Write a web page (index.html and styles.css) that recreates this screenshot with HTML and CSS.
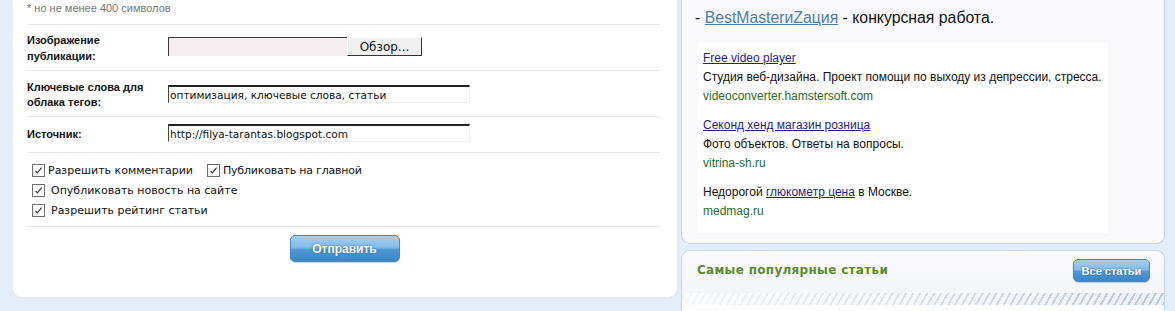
FILE: index.html
```html
<!DOCTYPE html>
<html lang="ru">
<head>
  <meta charset="UTF-8">
  <meta name="viewport" content="width=device-width, initial-scale=1.0">
  <title>Добавить публикацию</title>
  <link rel="stylesheet" href="styles.css">
</head>
<body>
  <div class="page">
    <!-- Form -->
    <div class="form-panel">
      <div class="note">* но не менее 400 символов</div>

      <div class="form-row row-image">
        <div class="label">Изображение<br>публикации:</div>
        <div class="file-field">
          <span class="file-path"></span>
          <button class="file-button" type="button">Обзор...</button>
        </div>
      </div>

      <div class="form-row row-tags">
        <div class="label">Ключевые слова для<br>облака тегов:</div>
        <input class="text-input" type="text" value="оптимизация, ключевые слова, статьи">
      </div>

      <div class="form-row row-source">
        <div class="label">Источник:</div>
        <input class="text-input" type="text" value="http://filya-tarantas.blogspot.com">
      </div>

      <div class="options">
        <div class="option-line">
          <label class="option"><svg class="check" viewBox="0 0 13 13"><rect x="0.5" y="0.5" width="12" height="12" fill="#fff" stroke="#6d6d6d"/><path d="M3.5 6.8 L5.4 8.8 L9.6 3.6" fill="none" stroke="#333" stroke-width="1.1"/></svg>Разрешить комментарии</label>
          <label class="option option-main"><svg class="check" viewBox="0 0 13 13"><rect x="0.5" y="0.5" width="12" height="12" fill="#fff" stroke="#6d6d6d"/><path d="M3.5 6.8 L5.4 8.8 L9.6 3.6" fill="none" stroke="#333" stroke-width="1.1"/></svg>Публиковать на главной</label>
        </div>
        <div class="option-line">
          <label class="option option-wide"><svg class="check" viewBox="0 0 13 13"><rect x="0.5" y="0.5" width="12" height="12" fill="#fff" stroke="#6d6d6d"/><path d="M3.5 6.8 L5.4 8.8 L9.6 3.6" fill="none" stroke="#333" stroke-width="1.1"/></svg>Опубликовать новость на сайте</label>
        </div>
        <div class="option-line">
          <label class="option option-wide"><svg class="check" viewBox="0 0 13 13"><rect x="0.5" y="0.5" width="12" height="12" fill="#fff" stroke="#6d6d6d"/><path d="M3.5 6.8 L5.4 8.8 L9.6 3.6" fill="none" stroke="#333" stroke-width="1.1"/></svg>Разрешить рейтинг статьи</label>
        </div>
      </div>

      <div class="submit-row">
        <button class="blue-button submit" type="button">Отправить</button>
      </div>
    </div>

    <!-- Sidebar -->
    <div class="sidebar">
      <div class="side-box">
        <div class="contest">- <a href="#">BestMasterиZация</a> - конкурсная работа.</div>

        <div class="ads">
          <div class="ad">
            <a class="ad-title" href="#">Free video player</a>
            <div class="ad-text">Студия веб-дизайна. Проект помощи по выходу из депрессии, стресса.</div>
            <div class="ad-url">videoconverter.hamstersoft.com</div>
          </div>
          <div class="ad">
            <a class="ad-title" href="#">Секонд хенд магазин розница</a>
            <div class="ad-text">Фото объектов. Ответы на вопросы.</div>
            <div class="ad-url">vitrina-sh.ru</div>
          </div>
          <div class="ad">
            <div class="ad-text">Недорогой <a href="#">глюкометр цена</a> в Москве.</div>
            <div class="ad-url">medmag.ru</div>
          </div>
        </div>
      </div>

      <div class="side-box popular">
        <div class="popular-head">
          <h3>Самые популярные статьи</h3>
          <button class="blue-button all" type="button">Все статьи</button>
        </div>
        <div class="hatch"></div>
        <div class="popular-body"></div>
      </div>
    </div>
  </div>
</body>
</html>
```

FILE: styles.css
```css
body {
  margin: 0;
  background-color: #e4eefa;
  font-family: "Liberation Sans", Arial, sans-serif;
  color: #111;
  overflow: hidden;
}

.page {
  display: flex;
  align-items: flex-start;
  padding-left: 13px;
}

/* Form panel */
.form-panel {
  width: 664px;
  padding: 2px 17px 35px 14px;
  background: #fff;
  border-radius: 0 0 9px 9px;
  box-sizing: border-box;
}

.note {
  font-size: 11px;
  line-height: 13px;
  color: #777;
  padding-bottom: 9px;
}

.form-row {
  display: flex;
  align-items: center;
  border-top: 1px solid #e8e8e8;
}

.row-image { height: 45px; }
.row-tags { height: 45px; }
.row-source { height: 35px; }

.label {
  width: 141px;
  font-size: 11px;
  font-weight: bold;
  line-height: 15px;
  color: #111;
}

.row-image .label { line-height: 16px; padding-top: 1px; }
.row-tags .label { padding-top: 2px; }

.file-field {
  display: flex;
  margin-top: -2px;
}

.file-path {
  width: 178px;
  height: 18px;
  background: #f4eef1;
  border-top: 1px solid #3a3a3a;
  border-left: 1px solid #3a3a3a;
}

.file-button {
  width: 75px;
  height: 19px;
  padding: 0;
  background: #f0f0f0;
  border: 1px solid;
  border-color: #fff #333 #333 #fff;
  font-family: "DejaVu Sans", sans-serif;
  font-size: 12px;
  color: #111;
}

.text-input {
  width: 302px;
  height: 18px;
  box-sizing: border-box;
  margin: 0;
  padding: 1px 1px 0;
  border: 1px solid #eee;
  border-top: 2px solid #222;
  border-left: 1px solid #444;
  font-family: "DejaVu Sans", sans-serif;
  font-size: 10.6px;
  color: #111;
  outline: none;
}

.row-source .text-input { margin-top: -3px; }

.options {
  border-top: 1px solid #e8e8e8;
  border-bottom: 1px solid #e8e8e8;
  padding: 7px 0 6px 5px;
}

.option-line {
  display: flex;
  height: 20px;
  align-items: center;
}

.option {
  display: flex;
  align-items: center;
  font-family: "DejaVu Sans", sans-serif;
  font-size: 11px;
  color: #111;
}

.check {
  width: 13px;
  height: 13px;
  margin-right: 3px;
}

.option-main { margin-left: 14px; letter-spacing: -0.2px; }
.option-wide .check { margin-right: 6px; }

.submit-row {
  display: flex;
  justify-content: center;
  padding-top: 8px;
}

.blue-button {
  border: 1px solid #4f86b8;
  border-radius: 5px;
  background: linear-gradient(#a7cff0 0%, #84bbe6 45%, #4f98d4 55%, #3b86c5 100%);
  color: #fff;
  font-family: "Liberation Sans", Arial, sans-serif;
  font-weight: bold;
  text-shadow: 0 0 2px #2a5f8f;
  padding: 0;
  box-shadow: 0 1px 1px rgba(60, 100, 140, 0.3);
}

.submit {
  width: 110px;
  height: 27px;
  font-size: 12px;
  margin-left: 2px;
}

/* Sidebar */
.sidebar {
  width: 484px;
  margin-left: 4px;
}

.side-box {
  background: #fafafd;
  border: 1px solid #c3d5ea;
  border-top: none;
  border-radius: 0 0 9px 9px;
  padding: 0 0 10px 13px;
}

.contest {
  font-size: 15.8px;
  line-height: 19px;
  padding-top: 8px;
  color: #111;
}

.contest a {
  color: #4d7ea8;
}

.ads {
  width: 411px;
  margin: 16px 0 0 2px;
  padding: 6px 6px 12px;
  box-sizing: border-box;
  background: #fff;
  font-size: 12px;
  line-height: 19px;
}

.ad + .ad { margin-top: 10px; }

.ad-title, .ad-text a {
  color: #1f1f86;
}

.ad-title { display: block; }

.ad-text { color: #111; }

.ad-url { color: #2d6b2d; }

.popular {
  margin-top: 6px;
  border-top: 1px solid #c3d5ea;
  border-radius: 9px 9px 0 0;
  padding: 0;
  background: #fff;
}

.popular-head {
  display: flex;
  align-items: flex-start;
  justify-content: space-between;
  height: 42px;
  box-sizing: border-box;
  padding: 8px 14px 0 15px;
  background: linear-gradient(#fafafd, #f5f6fa);
  border-radius: 9px 9px 0 0;
}

.popular-head h3 {
  margin: 0;
  font-family: "DejaVu Sans", sans-serif;
  font-size: 12px;
  line-height: 16px;
  font-weight: bold;
  letter-spacing: 0.3px;
  color: #5b8a2f;
  padding-top: 3px;
}

.all {
  width: 77px;
  height: 23px;
  font-size: 11px;
}

.hatch {
  height: 12px;
  background:
    linear-gradient(90deg, rgba(255, 255, 255, 0.85), rgba(255, 255, 255, 0)),
    repeating-linear-gradient(-60deg, #b8cadf 0 2px, #eef2f8 2px 6px);
}

.popular-body {
  height: 20px;
}
```
